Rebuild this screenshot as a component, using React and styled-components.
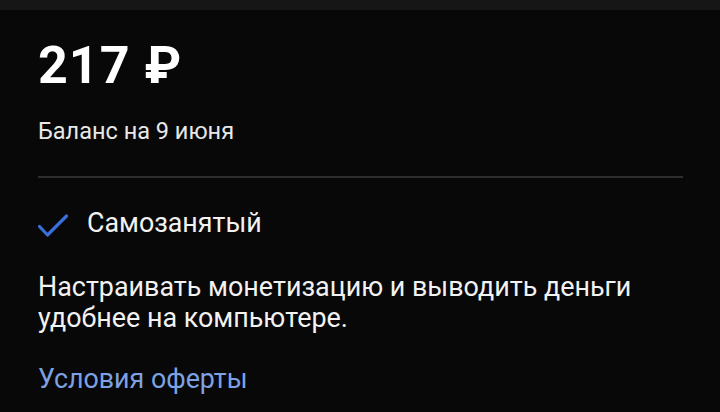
import React from 'react';
import styled, { createGlobalStyle } from 'styled-components';

const GlobalStyle = createGlobalStyle`
  html, body {
    margin: 0;
    padding: 0;
    background: #080808;
  }
  body {
    font-family: Roboto, "Noto Sans", sans-serif;
    -webkit-font-smoothing: antialiased;
  }
`;

const Screen = styled.div`
  width: 720px;
  height: 412px;
  overflow: hidden;
  background: #080808;
  display: flex;
  flex-direction: column;
`;

const TopStrip = styled.div`
  height: 10px;
  background: #161616;
  flex-shrink: 0;
`;

const Content = styled.div`
  padding: 0 37px 0 38px;
  display: flex;
  flex-direction: column;
`;

const Amount = styled.div`
  margin-top: 26px;
  font-size: 52px;
  line-height: 60px;
  font-weight: 700;
  color: #ffffff;
  letter-spacing: 1px;
`;

const Caption = styled.div`
  margin-top: 21px;
  font-size: 23.5px;
  line-height: 28px;
  color: #e8e8e8;
`;

const Divider = styled.hr`
  margin: 31px 0 0;
  border: 0;
  height: 2px;
  background: #2e2e2e;
`;

const StatusRow = styled.div`
  margin-top: 29px;
  display: flex;
  align-items: flex-start;
  gap: 19px;
  font-size: 26.8px;
  line-height: 32px;
  color: #f2f2f2;

  svg {
    flex-shrink: 0;
    margin-top: 6px;
  }
`;

const Text = styled.p`
  margin: 33px 0 0;
  font-size: 26.9px;
  line-height: 31px;
  color: #f2f2f2;
`;

const OfferLink = styled.a`
  margin-top: 29px;
  font-size: 26.8px;
  line-height: 32px;
  color: #7da2e3;
  text-decoration: none;
`;

const Check = () => (
  <svg width="30" height="26" viewBox="0 0 30 26" fill="none">
    <path
      d="M1.5 13.5L9.5 22L28.5 3"
      stroke="#3a6fd9"
      strokeWidth="3.2"
      strokeLinecap="round"
      strokeLinejoin="round"
    />
  </svg>
);

export default function App() {
  return (
    <>
      <GlobalStyle />
      <Screen>
        <TopStrip />
        <Content>
          <Amount>217 ₽</Amount>
          <Caption>Баланс на 9 июня</Caption>
          <Divider />
          <StatusRow>
            <Check />
            <span>Самозанятый</span>
          </StatusRow>
          <Text>
            Настраивать монетизацию и выводить деньги
            <br />
            удобнее на компьютере.
          </Text>
          <OfferLink href="#">Условия оферты</OfferLink>
        </Content>
      </Screen>
    </>
  );
}
